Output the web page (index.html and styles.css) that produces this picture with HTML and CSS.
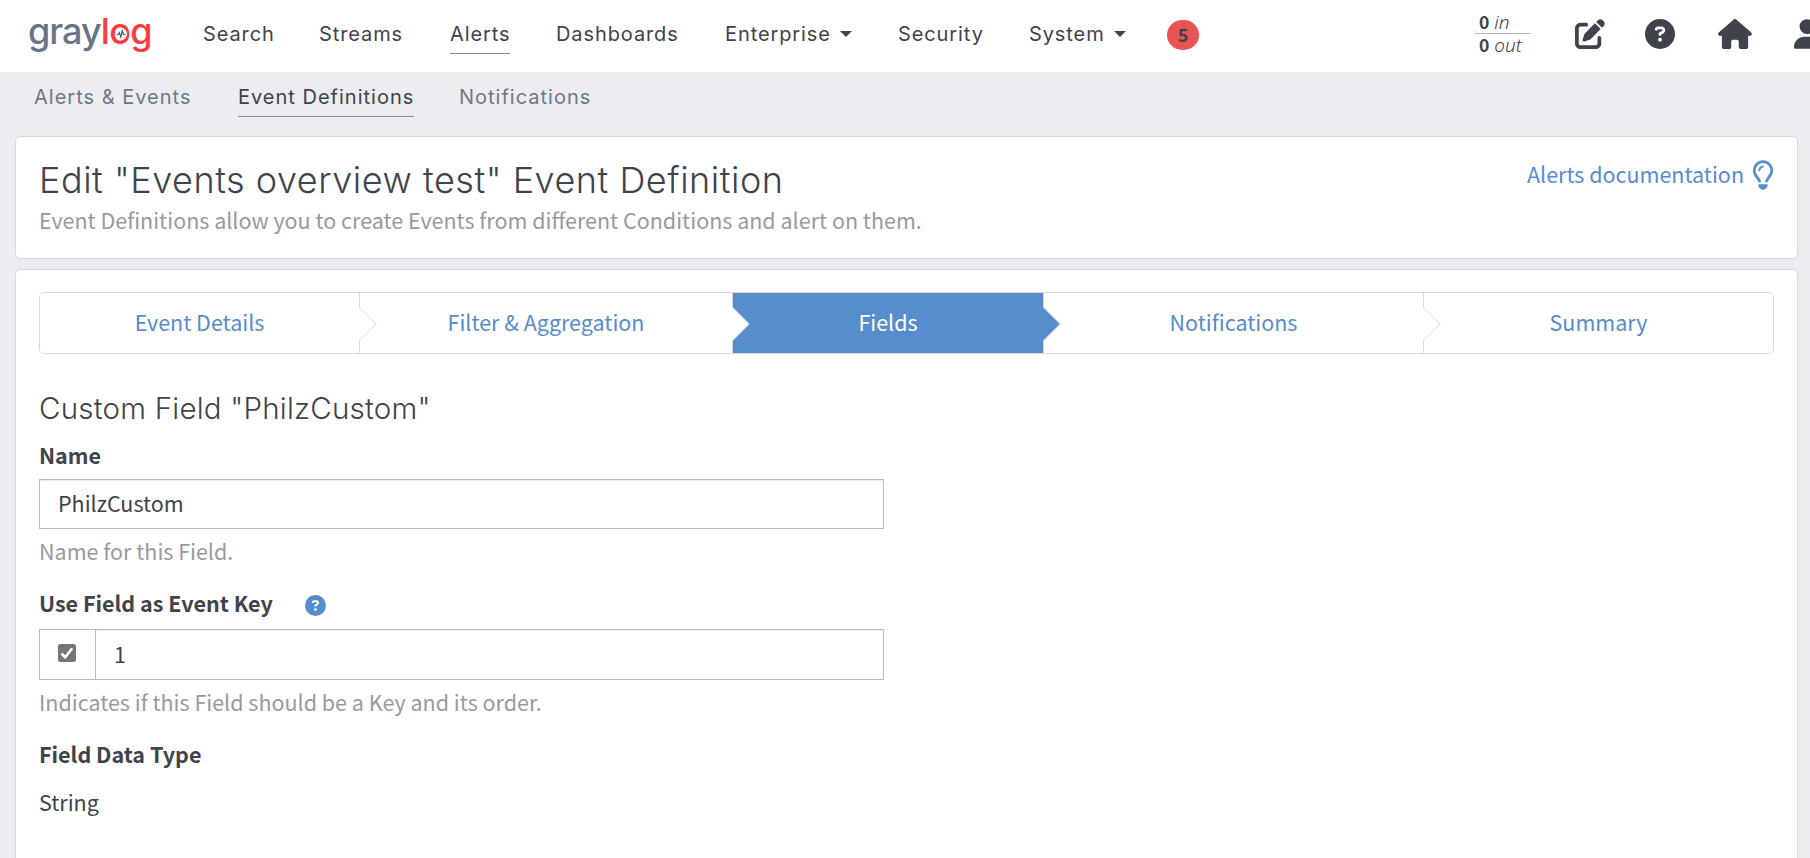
FILE: index.html
```html
<!DOCTYPE html>
<html lang="en">
<head>
<meta charset="utf-8">
<title>Graylog - Edit Event Definition</title>
<link rel="stylesheet" href="styles.css">
</head>
<body>
<header class="navbar">
  <a class="logo"><span class="logo-gray">gray</span><span class="logo-red">log</span>
    <svg class="logo-pulse" viewBox="0 0 12 12"><circle cx="6" cy="6" r="6"/><path d="M1.500 6.500h1.700l1.200-1.800 1.400 4.600L7.300 2.800l1.200 3.700h2"/></svg>
  </a>
  <nav class="main-nav">
    <a>Search</a>
    <a>Streams</a>
    <a class="active">Alerts</a>
    <a>Dashboards</a>
    <a>Enterprise<i class="caret"></i></a>
    <a>Security</a>
    <a>System<i class="caret"></i></a>
    <span class="badge">5</span>
  </nav>
  <div class="tools">
    <div class="throughput"><div><b>0</b> <i>in</i></div><div class="out"><b>0</b> <i>out</i></div></div>
    <svg class="icon edit" viewBox="0 0 512 512"><path d="M471.600 21.700c-21.900-21.900-57.300-21.900-79.200 0L362.300 51.700l97.900 97.900 30.100-30.100c21.900-21.900 21.900-57.300 0-79.200L471.600 21.700zm-299.200 220c-6.100 6.100-10.800 13.600-13.500 21.900l-29.600 88.800c-2.900 8.600-.6 18.100 5.800 24.600s15.900 8.700 24.600 5.800l88.800-29.600c8.200-2.700 15.700-7.400 21.900-13.500L437.700 172.300 339.700 74.300 172.400 241.700zM96 64C43 64 0 107 0 160V416c0 53 43 96 96 96H352c53 0 96-43 96-96V320c0-17.700-14.300-32-32-32s-32 14.300-32 32v96c0 17.700-14.300 32-32 32H96c-17.700 0-32-14.300-32-32V160c0-17.700 14.300-32 32-32h96c17.700 0 32-14.300 32-32s-14.300-32-32-32H96z"/></svg>
    <svg class="icon help" viewBox="0 0 512 512"><path d="M256 512A256 256 0 1 0 256 0a256 256 0 1 0 0 512zM169.800 165.300c7.900-22.300 29.100-37.300 52.800-37.300h58.300c34.900 0 63.100 28.300 63.100 63.100c0 22.600-12.100 43.500-31.700 54.800L280 264.400c-.2 13-10.900 23.600-24 23.600c-13.300 0-24-10.700-24-24V250.500c0-8.600 4.600-16.500 12.100-20.800l44.300-25.400c4.700-2.700 7.600-7.700 7.600-13.100c0-8.400-6.800-15.100-15.100-15.100H222.600c-3.400 0-6.400 2.100-7.500 5.300l-.4 1.200c-4.400 12.500-18.200 19-30.600 14.600s-19-18.200-14.600-30.600l.4-1.200zM224 352a32 32 0 1 1 64 0 32 32 0 1 1 -64 0z"/></svg>
    <svg class="icon home" viewBox="0 0 576 512"><path d="M575.800 255.500c0 18-15 32.100-32 32.100h-32l.7 160.200c0 2.700-.2 5.400-.5 8.100V472c0 22.100-17.900 40-40 40H392c-22.100 0-40-17.900-40-40V384c0-17.700-14.300-32-32-32H256c-17.700 0-32 14.300-32 32v88c0 22.100-17.900 40-40 40H104c-22.100 0-40-17.900-40-40V287.600H32c-18 0-32-14-32-32.100c0-9 3-17 10-24L266.400 8c7-7 15-8 22-8s15 2 21 7L564.800 231.500c8 7 12 15 11 24z"/></svg>
    <svg class="icon user" viewBox="0 0 448 512"><path d="M224 256A128 128 0 1 0 224 0a128 128 0 1 0 0 256zm-45.700 48C79.800 304 0 383.800 0 482.300C0 498.700 13.300 512 29.700 512H418.300c16.400 0 29.700-13.300 29.700-29.700C448 383.800 368.200 304 269.700 304H178.300z"/></svg>
  </div>
</header>
<nav class="sub-nav">
  <a>Alerts &amp; Events</a>
  <a class="active">Event Definitions</a>
  <a>Notifications</a>
</nav>
<section class="card page-header">
  <div>
    <h1>Edit "Events overview test" Event Definition</h1>
    <p class="subtitle">Event Definitions allow you to create Events from different Conditions and alert on them.</p>
  </div>
  <a class="doc-link">Alerts documentation
    <svg class="bulb" viewBox="0 0 384 512"><path d="M297.200 248.900C311.600 228.300 320 203.200 320 176c0-70.700-57.300-128-128-128S64 105.300 64 176c0 27.200 8.400 52.300 22.800 72.900c3.700 5.300 8.100 11.300 12.800 17.700c12.900 17.700 28.300 38.900 39.800 59.800c10.400 19 15.700 38.800 18.300 57.500H109c-2.200-12-5.900-23.700-11.800-34.500c-9.900-18-22.200-34.900-34.500-51.800c-5.200-7.100-10.400-14.200-15.400-21.400C27.600 247.300 16 213.300 16 176C16 78.800 94.800 0 192 0s176 78.800 176 176c0 37.300-11.600 71.300-31.300 100.200c-5 7.300-10.200 14.300-15.400 21.400c-12.300 16.800-24.600 33.700-34.500 51.800c-5.900 10.800-9.600 22.500-11.800 34.500H226.400c2.600-18.700 7.900-38.600 18.300-57.500c11.500-20.900 26.900-42.100 39.800-59.800c4.700-6.400 9-12.400 12.700-17.700zM192 128c-26.500 0-48 21.500-48 48c0 8.800-7.200 16-16 16s-16-7.200-16-16c0-44.200 35.800-80 80-80c8.800 0 16 7.200 16 16s-7.200 16-16 16zm0 384c-44.200 0-80-35.800-80-80V416H272v16c0 44.200-35.800 80-80 80z"/></svg>
  </a>
</section>
<main class="card content">
  <div class="wizard">
    <a class="step">Event Details</a>
    <a class="step">Filter &amp; Aggregation</a>
    <a class="step current">Fields</a>
    <a class="step">Notifications</a>
    <a class="step">Summary</a>
  </div>
  <h2>Custom Field "PhilzCustom"</h2>
  <form class="field-form">
    <div class="label">Name</div>
    <div class="input">PhilzCustom</div>
    <p class="help-text">Name for this Field.</p>
    <div class="label">Use Field as Event Key
      <svg class="hint" viewBox="0 0 512 512"><path d="M256 512A256 256 0 1 0 256 0a256 256 0 1 0 0 512zM169.800 165.300c7.900-22.300 29.100-37.300 52.800-37.300h58.300c34.900 0 63.100 28.300 63.100 63.100c0 22.600-12.100 43.500-31.700 54.800L280 264.400c-.2 13-10.900 23.600-24 23.600c-13.300 0-24-10.700-24-24V250.500c0-8.600 4.600-16.500 12.100-20.800l44.300-25.400c4.700-2.700 7.600-7.700 7.600-13.100c0-8.400-6.800-15.100-15.100-15.100H222.600c-3.400 0-6.400 2.100-7.500 5.300l-.4 1.200c-4.400 12.500-18.200 19-30.600 14.600s-19-18.200-14.600-30.600l.4-1.200zM224 352a32 32 0 1 1 64 0 32 32 0 1 1 -64 0z"/></svg>
    </div>
    <div class="input-group">
      <div class="addon"><svg class="check" viewBox="0 0 18 18"><rect width="18" height="18" rx="2.500"/><path d="M3.500 9.500l3.700 3.700 7-9"/></svg></div>
      <div class="input">1</div>
    </div>
    <p class="help-text">Indicates if this Field should be a Key and its order.</p>
    <div class="label">Field Data Type</div>
    <p class="static">String</p>
  </form>
</main>
</body>
</html>
```
FILE: styles.css
```css
* { box-sizing: border-box; }
html, body { height: 100%; overflow: hidden; }
body {
  margin: 0;
  display: flex;
  flex-direction: column;
  background: #ecedf1;
  color: #3e434c;
  font: 21.5px/30px "Noto Sans CJK SC", "Noto Sans", sans-serif;
}
h1, h2, p { margin: 0; font-weight: 400; }
svg { display: block; flex: none; }

.navbar {
  flex: none;
  display: flex;
  height: 72px;
  padding-left: 28px;
  background: #fff;
}
.logo {
  position: relative;
  flex: none;
  width: 175px;
  padding-top: 11px;
  font: 500 36px/40px Inter, sans-serif;
}
.logo-gray { color: #6a7488; letter-spacing: -1px; }
.logo-red { color: #ff3b3b; letter-spacing: -.6px; }
.logo-pulse {
  position: absolute;
  left: 86.500px;
  top: 28px;
  width: 12px;
  height: 12px;
  fill: none;
  stroke: #4f596c;
  stroke-width: 1.200;
}
.logo-pulse circle { fill: #fff; stroke: none; }
.main-nav {
  display: grid;
  grid-template-columns: 116px 131px 106px 169px 173px 131px 138px 32px;
  align-items: start;
  justify-items: start;
  padding-top: 15px;
}
.main-nav a, .sub-nav a {
  display: flex;
  align-items: center;
  font: 400 20px/38px Inter, sans-serif;
  letter-spacing: .9px;
  border-bottom: 1px solid transparent;
}
.main-nav .active, .sub-nav .active { border-bottom-color: #8b8e95; color: #3e434c; }
.caret {
  margin-left: 9px;
  border: 6px solid transparent;
  border-top-color: #3e434c;
  border-bottom: 0;
}
.badge {
  width: 32px;
  height: 30px;
  margin-top: 5px;
  border-radius: 15px;
  background: #eb5454;
  font-size: 18px;
  font-weight: 700;
  line-height: 29px;
  text-align: center;
}
.tools {
  display: flex;
  flex: none;
  margin-left: 275px;
}
.throughput {
  width: 57px;
  height: 49px;
  margin: 11px 44px 0 0;
  font-size: 17.500px;
  line-height: 22px;
}
.throughput div { display: flex; gap: 5px; padding-left: 5px; }
.throughput i { font-family: "Noto Sans", sans-serif; font-size: 19px; font-weight: 300; }
.throughput .out { border-top: 1px solid #b4bccb; }
.icon { height: 30px; margin-top: 19px; fill: #3e434c; }
.edit { width: 30px; margin-right: 40px; }
.help { width: 30px; margin-right: 43px; }
.home { width: 34px; margin-right: 42px; }
.user { width: 26px; }

.sub-nav {
  flex: none;
  display: grid;
  grid-template-columns: 204px 221px 140px;
  align-items: start;
  justify-items: start;
  height: 64px;
  padding: 6px 0 0 34px;
  color: #6f7886;
  background: linear-gradient(#efeff0 0, #efeff0 4px, #ecedf1 8px);
}
.sub-nav a { letter-spacing: 1px; }

.card {
  flex: none;
  margin: 0 12px 0 15px;
  border: 1px solid #d5d9e3;
  border-radius: 5px;
  background: #fff;
}
.page-header {
  display: flex;
  justify-content: space-between;
  height: 123px;
  padding: 23px 23px 0;
}
h1 { font: 300 36px/40px Inter, sans-serif; letter-spacing: .52px; }
.subtitle { margin-top: 5px; color: #989a9f; }
.doc-link { display: flex; gap: 8px; margin-top: -1px; height: 30px; color: #578ccd; }
.bulb { width: 22px; height: 30px; fill: #578ccd; margin-top: 1px; }

.content { height: 620px; margin-top: 10px; padding: 22px 23px 0; }
.wizard {
  display: grid;
  grid-template-columns: 320px 373px 311px 380px 1fr;
  height: 62px;
  border: 1px solid #d5d9e3;
  border-radius: 5px;
}
.step {
  position: relative;
  display: flex;
  align-items: center;
  justify-content: center;
  padding-bottom: 2px;
  color: #578ccd;
  background: #fff;
  border-right: 1px solid #d5d9e3;
}
.step:first-child { border-radius: 4px 0 0 4px; }
.step:last-child { border-right: 0; border-radius: 0 4px 4px 0; }
.step:not(:last-child)::after {
  content: "";
  position: absolute;
  z-index: 1;
  right: -12.500px;
  top: 18.500px;
  width: 23px;
  height: 23px;
  transform: rotate(45deg);
  background: inherit;
  border: 1px solid #d9dce6;
  border-left: 0;
  border-bottom: 0;
  clip-path: polygon(0 0, 100% 0, 100% 100%, 92% 100%, 0 8%);
}
.current { background: #578ccd; color: #fff; }

h2 { margin-top: 36px; font: 300 29.500px/36px Inter, sans-serif; letter-spacing: .22px; }
.field-form { width: 845px; }
.label { display: flex; margin-top: 14px; font-weight: 700; }
.input {
  display: flex;
  align-items: center;
  height: 50px;
  margin-top: 9px;
  padding: 0 18px 2px;
  border: 1px solid #b4bccb;
  box-shadow: inset 0 1px 1px rgba(0, 0, 0, .075);
}
.help-text { margin-top: 7px; color: #989a9f; }
.help-text + .label { margin-top: 22px; }
.hint { width: 21px; height: 21px; margin: 7px 0 0 32px; fill: #578ccd; }
.input-group { display: flex; margin-top: 11px; height: 51px; }
.input-group .input { flex: 1; height: 51px; margin: 0; }
.addon {
  width: 56px;
  padding: 14px 0 0 18px;
  border: 1px solid #b4bccb;
  border-right: 0;
}
.check { width: 18px; height: 18px; fill: #757575; }
.check path { fill: none; stroke: #fff; stroke-width: 2.600; }
.static { margin-top: 18px; }
```
